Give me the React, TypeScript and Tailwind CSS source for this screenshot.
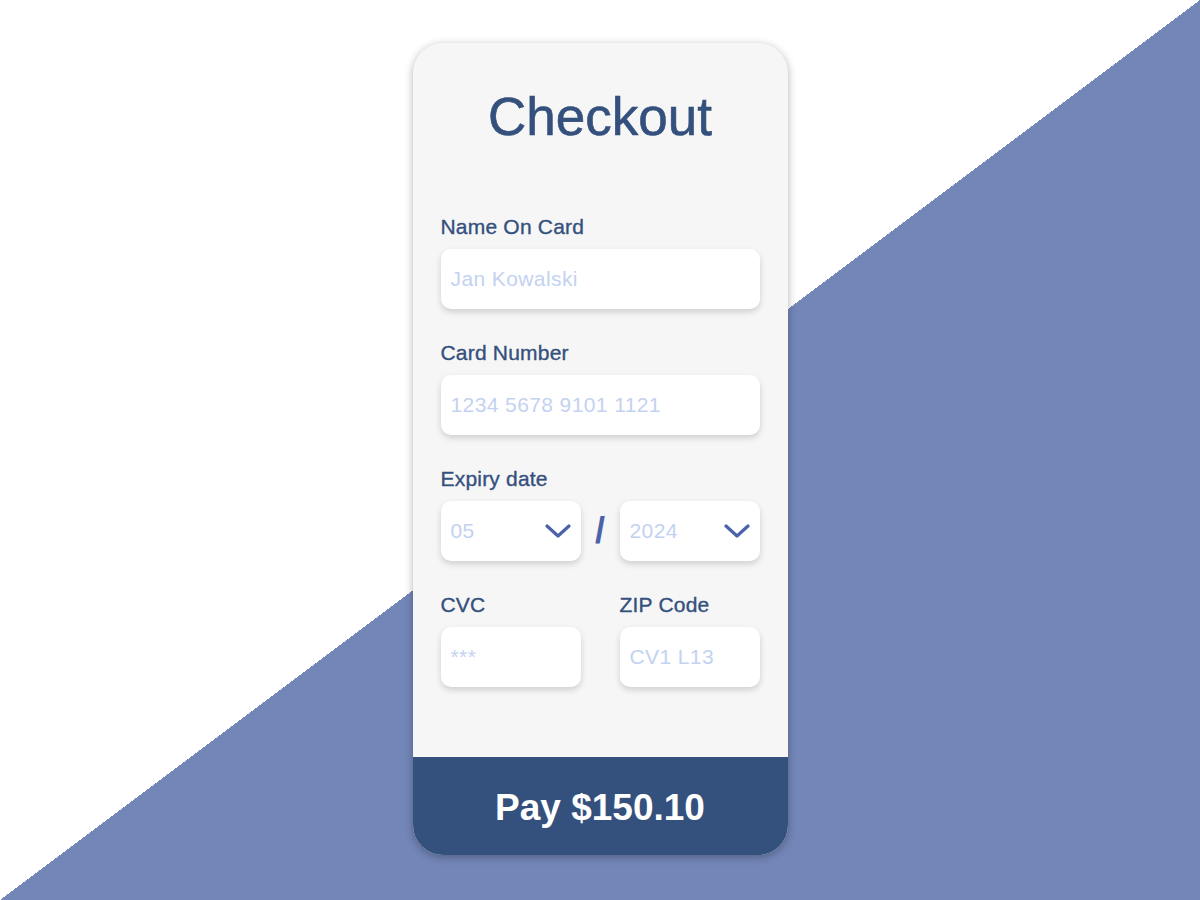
import React from "react";

const font = { fontFamily: '"Liberation Sans", Arial, sans-serif' };

function Chevron() {
  return (
    <svg width="26" height="16" viewBox="0 0 26 16" fill="none">
      <path d="M2 3 L13 13 L24 3" stroke="#4c62a8" strokeWidth="3.2" strokeLinecap="round" strokeLinejoin="round" />
    </svg>
  );
}

function Label({ children }: { children: React.ReactNode }) {
  return (
    <div className="text-[21px] leading-[24px] tracking-[0.2px] text-[#34507d] [-webkit-text-stroke:0.35px_#34507d] mb-[10px]">
      {children}
    </div>
  );
}

function Box({ children, className = "" }: { children: React.ReactNode; className?: string }) {
  return (
    <div
      className={
        "h-[60px] bg-white rounded-[10px] shadow-[0_3px_6px_rgba(0,0,0,0.16)] flex items-center px-[10px] text-[21px] tracking-[0.4px] text-[#c3d2f1] " +
        className
      }
    >
      {children}
    </div>
  );
}

export default function App() {
  return (
    <div
      className="w-[1200px] h-[900px] overflow-hidden bg-[linear-gradient(to_top_left,#7386b8_50%,#ffffff_50%)] pt-[43px]"
      style={font}
    >
      <div className="mx-auto w-[375px] h-[812px] rounded-[30px] bg-[#f6f6f6] shadow-[0_2px_8px_rgba(0,0,0,0.3)] overflow-hidden flex flex-col">
        <div className="pt-[44px] text-center text-[53px] leading-[60px] text-[#34507d] [-webkit-text-stroke:0.6px_#34507d]">
          Checkout
        </div>
        <div className="px-[28px] pt-[68px] flex flex-col">
          <Label>Name On Card</Label>
          <Box>Jan Kowalski</Box>
          <div className="h-[32px]" />
          <Label>Card Number</Label>
          <Box>1234 5678 9101 1121</Box>
          <div className="h-[32px]" />
          <Label>Expiry date</Label>
          <div className="flex items-center">
            <Box className="w-[140px] justify-between pr-[10px]">
              <span>05</span>
              <Chevron />
            </Box>
            <div className="flex-1 text-center text-[36px] leading-[40px] text-[#4c62a8] font-bold">/</div>
            <Box className="w-[140px] justify-between pr-[10px]">
              <span>2024</span>
              <Chevron />
            </Box>
          </div>
          <div className="h-[32px]" />
          <div className="flex justify-between">
            <div className="w-[140px]">
              <Label>CVC</Label>
              <Box>***</Box>
            </div>
            <div className="w-[140px]">
              <Label>ZIP Code</Label>
              <Box>CV1 L13</Box>
            </div>
          </div>
        </div>
        <div className="mt-auto h-[98px] pt-[4px] bg-[#34507d] flex items-center justify-center text-white font-bold text-[37px]">
          Pay $150.10
        </div>
      </div>
    </div>
  );
}
